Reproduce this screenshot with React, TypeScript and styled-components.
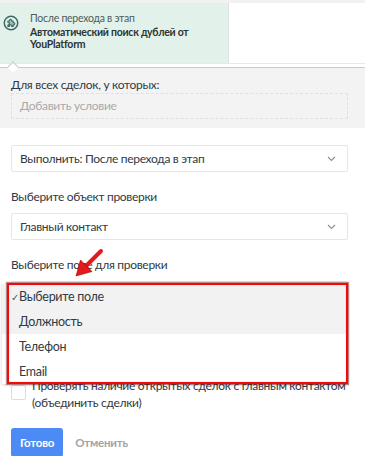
import styled, { createGlobalStyle } from 'styled-components';

const GlobalStyle = createGlobalStyle`
  html, body {
    margin: 0;
    padding: 0;
    background: #ffffff;
  }
  body {
    font-family: Lato, "Open Sans", "Liberation Sans", sans-serif;
    color: #313942;
    letter-spacing: -0.3px;
  }
  * {
    box-sizing: border-box;
  }
`;

const Page = styled.div`
  position: relative;
  width: 365px;
  height: 456px;
  overflow: hidden;
  background: #ffffff;
`;

const Header = styled.header`
  display: flex;
  height: 64px;
  border-top: 3px solid #f1f1f1;
  border-bottom: 1px solid #e8e8e8;
  > .trigger {
    display: flex;
    gap: 11px;
    width: 229px;
    padding: 8px 0 0 3px;
    background: #e3f1eb;
    border-right: 1px solid #e2e2e2;
    > svg {
      flex: none;
      margin-top: 4px;
    }
    > .text {
      font-size: 10.5px;
      line-height: 12px;
      letter-spacing: -0.25px;
      color: #4e5d59;
      padding-top: 1px;
      > strong {
        display: block;
        font-weight: 700;
        color: #2b3532;
        margin-top: 2px;
      }
    }
  }
`;

const Conditions = styled.section`
  position: relative;
  margin-top: 3px;
  background: #f3f3f3;
  border-top: 1px solid #c9c9c9;
  padding: 9px 17px 9px 11px;
  &::before {
    content: '';
    position: absolute;
    left: 9px;
    top: -5px;
    width: 7px;
    height: 7px;
    background: #ffffff;
    border-left: 1px solid #c9c9c9;
    border-top: 1px solid #c9c9c9;
    transform: rotate(45deg);
  }
  > .title {
    font-size: 12px;
    line-height: 16px;
    color: #313942;
  }
  > .add {
    height: 26px;
    border: 1px dashed #e0e0e0;
    padding: 0 8px;
    font-size: 12px;
    line-height: 24px;
    color: #a9a9a9;
  }
`;

const Form = styled.div`
  position: relative;
  padding: 17px 17px 0 11px;
`;

const Label = styled.div`
  font-size: 12px;
  line-height: 16px;
  color: #313942;
  margin: 17px 0 8px;
`;

const Select = styled.div`
  display: flex;
  align-items: center;
  justify-content: space-between;
  height: 27px;
  padding: 0 11px 0 8px;
  border: 1px solid #e6e6e6;
  border-radius: 2px;
  background: #ffffff;
  font-size: 12px;
  color: #313942;
  > span {
    flex: 1;
  }
`;

const Menu = styled.ul`
  position: absolute;
  left: 2px;
  top: 284px;
  width: 346px;
  margin: 0;
  padding: 0;
  list-style: none;
  background: #ffffff;
  box-shadow: 0 1px 3px rgba(0, 0, 0, 0.18);
  z-index: 2;
`;

const Option = styled.li<{ $active?: boolean }>`
  position: relative;
  height: 25px;
  padding-left: 17px;
  font-size: 12.5px;
  line-height: 26px;
  color: #313942;
  background: ${(p) => (p.$active ? '#f2f2f2' : '#ffffff')};
  > .check {
    position: absolute;
    left: 9px;
    top: 0;
    font-size: 10px;
    color: #555;
  }
`;

const Highlight = styled.div`
  position: absolute;
  left: 7px;
  top: 283px;
  width: 341px;
  height: 101px;
  border: 2px solid #f00a0a;
  box-shadow: 0 0 1px 1px rgba(120, 0, 0, 0.45), inset 0 0 1px rgba(120, 0, 0, 0.4);
  z-index: 3;
`;

const Arrow = styled.svg`
  position: absolute;
  left: 73px;
  top: 247px;
  z-index: 4;
`;

const CheckRow = styled.label`
  display: flex;
  gap: 6px;
  margin-top: 69px;
  font-size: 12px;
  line-height: 17px;
  color: #313942;
  white-space: nowrap;
  > .box {
    flex: none;
    width: 15px;
    height: 15px;
    margin-top: 8px;
    border: 1px solid #dcdcdc;
    border-radius: 2px;
    background: #ffffff;
  }
`;

const Actions = styled.div`
  display: flex;
  align-items: center;
  gap: 12px;
  margin-top: 17px;
`;

const Button = styled.button<{ $primary?: boolean }>`
  height: 29px;
  padding: 0 ${(p) => (p.$primary ? '9px' : '0')};
  border: none;
  border-radius: 3px;
  background: ${(p) => (p.$primary ? '#4c8bf5' : 'transparent')};
  color: ${(p) => (p.$primary ? '#ffffff' : '#a3a3a3')};
  font-family: inherit;
  font-size: 11.5px;
  font-weight: 700;
  letter-spacing: -0.2px;
`;

const Chevron = () => (
  <svg width="9" height="6" viewBox="0 0 9 6">
    <path d="M1 1l3.5 3.5L8 1" fill="none" stroke="#8a8f96" strokeWidth="1.1" />
  </svg>
);

const PuzzleIcon = () => (
  <svg width="16" height="16" viewBox="0 0 18 18">
    <circle cx="9" cy="9" r="7.6" fill="none" stroke="#3d6c66" strokeWidth="1.7" />
    <path
      d="M5.6 6.8h1.7a1.3 1.3 0 1 1 2.4 0h1.7v1.8a1.3 1.3 0 1 1 0 2.4v1.8H9.7a1.3 1.3 0 1 0-2.4 0H5.6v-1.8a1.3 1.3 0 1 0 0-2.4z"
      fill="#9fc2bb"
      stroke="#3d6c66"
      strokeWidth="1.3"
      strokeLinejoin="round"
    />
  </svg>
);

const App = () => {
  return (
    <Page>
      <GlobalStyle />
      <Header>
        <div className='trigger'>
          <PuzzleIcon />
          <div className='text'>
            После перехода в этап
            <strong>Автоматический поиск дублей от YouPlatform</strong>
          </div>
        </div>
      </Header>
      <Conditions>
        <div className='title'>Для всех сделок, у которых:</div>
        <div className='add'>Добавить условие</div>
      </Conditions>
      <Form>
        <Select>
          <span>Выполнить: После перехода в этап</span>
          <Chevron />
        </Select>
        <Label>Выберите объект проверки</Label>
        <Select>
          <span>Главный контакт</span>
          <Chevron />
        </Select>
        <Label>Выберите поле для проверки</Label>
        <Select>
          <span />
          <Chevron />
        </Select>
        <CheckRow>
          <span className='box' />
          <span>
            Проверять наличие открытых сделок с главным контактом
            <br />
            (объединить сделки)
          </span>
        </CheckRow>
        <Actions>
          <Button $primary>Готово</Button>
          <Button>Отменить</Button>
        </Actions>
      </Form>
      <Menu>
        <Option $active>
          <span className='check'>✓</span>Выберите поле
        </Option>
        <Option $active>Должность</Option>
        <Option>Телефон</Option>
        <Option>Email</Option>
      </Menu>
      <Highlight />
      <Arrow width="32" height="32" viewBox="0 0 32 32">
        <path d="M28 4L13 19" stroke="#e3191b" strokeWidth="4" strokeLinecap="round" />
        <path d="M3 29l4.5-16 11.5 11.5z" fill="#e3191b" stroke="#a00" strokeWidth="0.6" />
      </Arrow>
    </Page>
  );
};

export default App;
